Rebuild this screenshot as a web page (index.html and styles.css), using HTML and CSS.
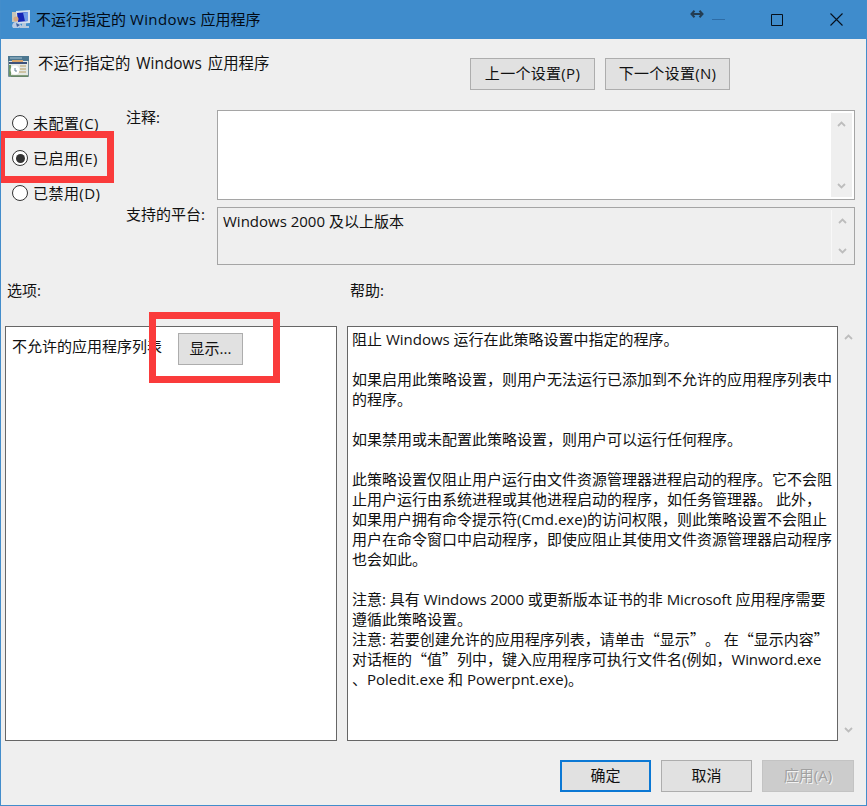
FILE: index.html
```html
<!DOCTYPE html>
<html lang="zh-CN">
<head>
<meta charset="utf-8">
<title>不运行指定的 Windows 应用程序</title>
<link rel="stylesheet" href="styles.css">
</head>
<body>
<div class="window">
  <header class="titlebar">
    <svg class="app-icon" width="20" height="20" viewBox="0 0 20 20">
      <path d="M1 2h5v10H1z" fill="#c9c5b8"/><path d="M5 1l14-1v13l-13 1z" fill="#d5e2ee"/>
      <path d="M6 3l11-1v9l-10 1z" fill="#1525b5"/><path d="M12 2.500l5-.5v9l-3 .3z" fill="#6f9ae8"/>
      <path d="M11 13h4v3h3v2H9v-2h2z" fill="#b7c9dc"/>
      <circle cx="5" cy="9" r="2.500" fill="#d9a77e"/><path d="M1 16q1-5 6-4l4 4-3 2H2z" fill="#b9cbe4"/><path d="M5 13l4 2-3 2z" fill="#3b5fa0"/>
    </svg>
    <h1 class="window-title">不运行指定的 <span class="wide">Windows</span> 应用程序</h1>
    <svg class="resize" width="14" height="10" viewBox="0 0 14 10"><path d="M3 5h8M4.500 1.800L1.500 5l3 3.200M9.500 1.800l3 3.200-3 3.200" fill="none" stroke="#233c52" stroke-width="2"/></svg>
    <svg class="minimize" width="14" height="12" viewBox="0 0 14 12"><path d="M0 5.500h13" stroke="#2d6ca6"/></svg>
    <svg class="maximize" width="12" height="12" viewBox="0 0 12 12"><path d="M.5.5h11v11H.5z" fill="none" stroke="#06101c"/></svg>
    <svg class="close" width="13" height="13" viewBox="0 0 13 13"><path d="M.5.5l12 12M12.500.5l-12 12" stroke="#06101c" stroke-width="1.100"/></svg>
  </header>

  <main class="content">
    <section class="heading">
      <svg class="policy-icon" width="21" height="21" viewBox="0 0 21 21">
        <path d="M.5.5h20v20H.5z" fill="#e3e8e4" stroke="#75909b"/><path d="M0 0h21v5H0z" fill="#4c7790"/>
        <path d="M2 2h12" stroke="#a9c6d5"/><path d="M4 5h11" stroke="#d8a468" stroke-width="2"/><path d="M1 7h18" stroke="#3d527c" stroke-width="2"/>
        <path d="M1 9h2v11H1z" fill="#6e9565"/><circle cx="7" cy="14" r="4.500" fill="#fff"/><path d="M7 12v3h2" fill="none" stroke="#618096"/>
        <path d="M12 10h6M12 13h6M11 16h7" stroke="#c7b78e" stroke-width="1.500"/><path d="M3 20h17" stroke="#638358" stroke-width="1.500"/>
      </svg>
      <h2 class="policy-title">不运行指定的 Windows 应用程序</h2>
      <button class="btn nav">上一个设置(P)</button>
      <button class="btn nav">下一个设置(N)</button>
    </section>

    <section class="state">
      <div class="radios">
        <label class="radio"><i class="dot"></i>未配置(C)</label>
        <label class="radio"><i class="dot on"></i>已启用(E)</label>
        <label class="radio"><i class="dot"></i>已禁用(D)</label>
        <div class="mark mark-enabled"></div>
      </div>
      <div class="fields">
        <span class="field-label">注释:</span>
        <div class="box comment"><div class="scroll">
          <svg width="9" height="6" viewBox="0 0 9 6"><path d="M1 5l3.500-3.500L8 5"/></svg>
          <svg width="9" height="6" viewBox="0 0 9 6"><path d="M1 1l3.500 3.500L8 1"/></svg>
        </div></div>
        <span class="field-label">支持的平台:</span>
        <div class="box platform"><span class="platform-text">Windows 2000 及以上版本</span><div class="scroll">
          <svg width="9" height="6" viewBox="0 0 9 6"><path d="M1 5l3.500-3.500L8 5"/></svg>
          <svg width="9" height="6" viewBox="0 0 9 6"><path d="M1 1l3.500 3.500L8 1"/></svg>
        </div></div>
      </div>
    </section>

    <section class="captions"><span>选项:</span><span>帮助:</span></section>

    <section class="panels">
      <div class="panel options">
        <span>不允许的应用程序列表</span>
        <button class="btn show">显示...</button>
        <div class="mark mark-show"></div>
      </div>
      <div class="panel help">
        <p>阻止 Windows 运行在此策略设置中指定的程序。</p>
        <p>如果启用此策略设置，则用户无法运行已添加到不允许的应用程序列表中<br>的程序。</p>
        <p>如果禁用或未配置此策略设置，则用户可以运行任何程序。</p>
        <p>此策略设置仅阻止用户运行由文件资源管理器进程启动的程序。它不会阻<br>止用户运行由系统进程或其他进程启动的程序，如任务管理器。 此外，<br>如果用户拥有命令提示符(Cmd.exe)的访问权限，则此策略设置不会阻止<br>用户在命令窗口中启动程序，即使应阻止其使用文件资源管理器启动程序<br>也会如此。</p>
        <p>注意: 具有 <span class="tight">Windows 2000</span> 或更新版本证书的非 <span class="tight">Microsoft</span> 应用程序需要<br>遵循此策略设置。<br>注意: 若要创建允许的应用程序列表，请单击<q>显示</q>。 在<q>显示内容</q><br>对话框的<q>值</q>列中，键入应用程序可执行文件名(例如，<span class="tight">Winword.exe</span><br>、Poledit.exe 和 Powerpnt.exe)。</p>
      </div>
      <div class="scroll outer">
        <svg width="9" height="6" viewBox="0 0 9 6"><path d="M1 5l3.500-3.500L8 5"/></svg>
        <svg width="9" height="6" viewBox="0 0 9 6"><path d="M1 1l3.500 3.500L8 1"/></svg>
      </div>
    </section>

    <footer class="actions">
      <button class="btn primary">确定</button>
      <button class="btn">取消</button>
      <button class="btn" disabled>应用(A)</button>
    </footer>
  </main>
</div>
</body>
</html>
```
FILE: styles.css
```css
* { box-sizing: border-box; }
body {
  margin: 0;
  color: #111;
  font: 15px/20px "Open Sans", "Noto Sans CJK SC", sans-serif;
  text-spacing-trim: space-all;
  white-space: nowrap;
}
h1, h2, p { margin: 0; font-size: 15px; font-weight: 400; }
svg { display: block; flex: none; }
/* full-width Chinese quotation marks */
q { font-family: "Noto Sans CJK SC", sans-serif; line-height: 1; quotes: "“" "”"; }
.wide { letter-spacing: .4px; }
.tight { letter-spacing: -.15px; }
.window { width: 867px; height: 806px; background: #efefef; border: 1px solid #438dcb; border-top: 0; overflow: hidden; }
.titlebar { height: 39px; margin: 0 -1px; padding-left: 11px; background: #3f8ccc; display: flex; align-items: center; }
.app-icon { margin-right: 5px; }
.window-title { width: 655px; padding-bottom: 2px; color: #020a14; }
.resize { margin: -12px 8px 0 -1px; }
.minimize { margin-right: 45px; }
.titlebar .maximize { margin: 0 47px 0 0; }

.content { padding: 18px 11px 0 4px; }
.heading { height: 53px; display: flex; align-items: flex-start; padding-left: 3px; }
.policy-icon { margin-top: -1px; }
.policy-title { width: 432px; margin: -3px 0 0 9px; font-size: 15.4px; word-spacing: 2px; }
.btn {
  height: 32px;
  width: 91px;
  padding: 0 0 2px;
  border: 1px solid #adadad;
  background: #e1e1e1;
  color: #111;
  font: inherit;
  line-height: 20px;
}
.nav { width: 125px; margin: 1px 10px 0 0; letter-spacing: .3px; }

.state { display: flex; height: 155px; }
.radios { position: relative; width: 121px; padding: 4px 0 0 7px; }
.radio { display: flex; align-items: center; height: 18px; margin-bottom: 17px; letter-spacing: .45px; }
.dot { width: 16px; height: 16px; margin-right: 5px; border: 1.5px solid #333; border-radius: 50%; background: #fff; display: grid; place-items: center; }
.dot.on::after { content: ""; width: 9px; height: 9px; border-radius: 50%; background: #333; }
.fields { display: grid; grid-template-columns: 91px 638px; grid-template-rows: 90px 58px; row-gap: 7px; }
.field-label { margin-top: -3px; }
.box { border: 1px solid #a5a5a5; background: #fff; display: flex; justify-content: flex-end; padding: 2px; }
.platform { background: #efefef; }
.platform-text { flex: 1; padding: 1px 0 0 3px; }
.scroll { width: 21px; background: #efefef; display: flex; flex-direction: column; justify-content: space-between; align-items: center; padding: 8px 0; }
.platform .scroll { border-left: 1px solid #f8f8f8; }
.scroll path { fill: none; stroke: #bdbdbd; stroke-width: 1.8; }

.captions { display: grid; grid-template-columns: 343px 1fr; height: 61px; padding: 15px 0 0 2px; }
.panels { display: flex; height: 415px; }
.panel { flex: none; background: #fff; border: 1px solid #666; }
.options { position: relative; width: 332px; margin-right: 10px; padding: 6px 0 0 6px; display: flex; align-items: flex-start; }
.options span { width: 151px; margin-top: 3px; }
.show { width: 65px; margin-left: 15px; }
.help { width: 491px; padding: 2px 0 0 4px; }
.help p + p { margin-top: 20px; }
.outer { flex: none; width: 21px; padding: 8px 0; }
.actions { display: flex; justify-content: flex-end; gap: 10px; padding: 19px 1px 0 0; }
.primary { border: 2px solid #0b78d4; }
.btn:disabled { width: 92px; background: #ccc; border-color: #c3c3c3; color: #a0a0a0; text-shadow: 1px 1px 0 #f4f4f4; }

/* highlight frames laid over the controls */
.mark { position: absolute; border: 7px solid #fa3b3b; pointer-events: none; }
.mark-enabled { left: -5px; top: 21px; width: 114px; height: 52px; border-left-width: 5px; }
.mark-show { left: 143px; top: -15px; width: 131px; height: 71px; }
```
